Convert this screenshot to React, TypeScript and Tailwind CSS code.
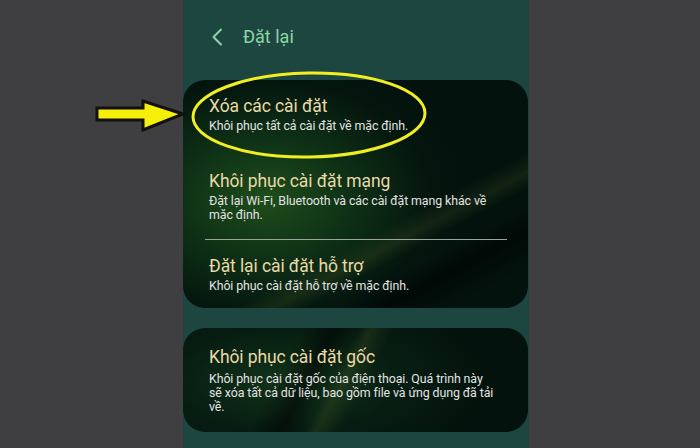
import React from 'react';

const font = { fontFamily: 'Roboto, "Noto Sans", "Liberation Sans", sans-serif' };

function Item({ title, lines, top }: { title: string; lines: string[]; top?: string }) {
    return (
        <div className={top}>
            <div className="text-[17.5px] leading-[20px] text-[#e9d9a6] tracking-[-0.1px]">{title}</div>
            <div className="mt-[3px] text-[12.4px] leading-[14px] text-[#e2e2e2] tracking-[-0.1px]">
                {lines.map((l, i) => (
                    <div key={i} className="whitespace-nowrap">{l}</div>
                ))}
            </div>
        </div>
    );
}

export default function App() {
    return (
        <div className="relative w-[700px] h-[448px] overflow-hidden bg-[#3f3f41]" style={font}>
            <div className="ml-[183px] w-[346px] h-full bg-[#1e4641] flex flex-col">
                {/* Header */}
                <div className="h-[80px] flex items-center pl-[28px] pb-[6px] text-[#8ad6a6]">
                    <svg width="12" height="18" viewBox="0 0 12 18" fill="none">
                        <path d="M10 1.5L2.5 9L10 16.5" stroke="currentColor" strokeWidth="2" strokeLinecap="round" strokeLinejoin="round" />
                    </svg>
                    <span className="ml-[20px] text-[18px] leading-[22px]">Đặt lại</span>
                </div>

                {/* Card 1 */}
                <div className="mr-[1px] h-[228px] rounded-[22px] pl-[26px] pr-[20px] pt-[16px] bg-[linear-gradient(152deg,transparent_62%,rgba(140,150,60,0.12)_67%,transparent_71%,transparent_75%,rgba(0,0,0,0.5)_81%,transparent_90%),radial-gradient(ellipse_60%_65%_at_24%_52%,#1e4d1c_0%,#0d2e15_45%,#04150e_80%,#03120d_100%)]">
                    <Item title="Xóa các cài đặt" lines={['Khôi phục tất cả cài đặt về mặc định.']} />
                    <Item
                        top="mt-[38px]"
                        title="Khôi phục cài đặt mạng"
                        lines={['Đặt lại Wi-Fi, Bluetooth và các cài đặt mạng khác về', 'mặc định.']}
                    />
                    <div className="mt-[17px] -ml-[4px] mr-[1px] h-px bg-[#9aa39c]" />
                    <Item top="mt-[16px]" title="Đặt lại cài đặt hỗ trợ" lines={['Khôi phục cài đặt hỗ trợ về mặc định.']} />
                </div>

                {/* Card 2 */}
                <div className="mt-[20px] mr-[1px] h-[104px] rounded-[22px] pl-[26px] pr-[20px] pt-[19px] bg-[linear-gradient(118deg,transparent_30%,rgba(0,0,0,0.5)_38%,transparent_44%,rgba(120,130,50,0.16)_47%,transparent_53%),radial-gradient(ellipse_60%_90%_at_30%_50%,#12341a_0%,#071d12_55%,#03120c_100%)]">
                    <div className="text-[17.5px] leading-[20px] text-[#e9d9a6] tracking-[-0.1px]">Khôi phục cài đặt gốc</div>
                    <div className="mt-[5px] text-[12.4px] leading-[14px] text-[#e2e2e2] tracking-[-0.1px]">
                        <div className="whitespace-nowrap">Khôi phục cài đặt gốc của điện thoại. Quá trình này</div>
                        <div className="whitespace-nowrap">sẽ xóa tất cả dữ liệu, bao gồm file và ứng dụng đã tải</div>
                        <div className="whitespace-nowrap">về.</div>
                    </div>
                </div>
            </div>

            {/* Annotation overlay */}
            <svg className="absolute left-0 top-0 pointer-events-none" width="700" height="448" viewBox="0 0 700 448">
                <ellipse cx="309" cy="115" rx="116" ry="42" fill="none" stroke="#f1ef22" strokeWidth="3" transform="rotate(-1 309 115)" />
                <polygon
                    points="97,108 143,108 143,101 183,114 143,130 143,120 97,120"
                    fill="#f5ef0a"
                    stroke="#111"
                    strokeWidth="3"
                    strokeLinejoin="miter"
                />
            </svg>
        </div>
    );
}
